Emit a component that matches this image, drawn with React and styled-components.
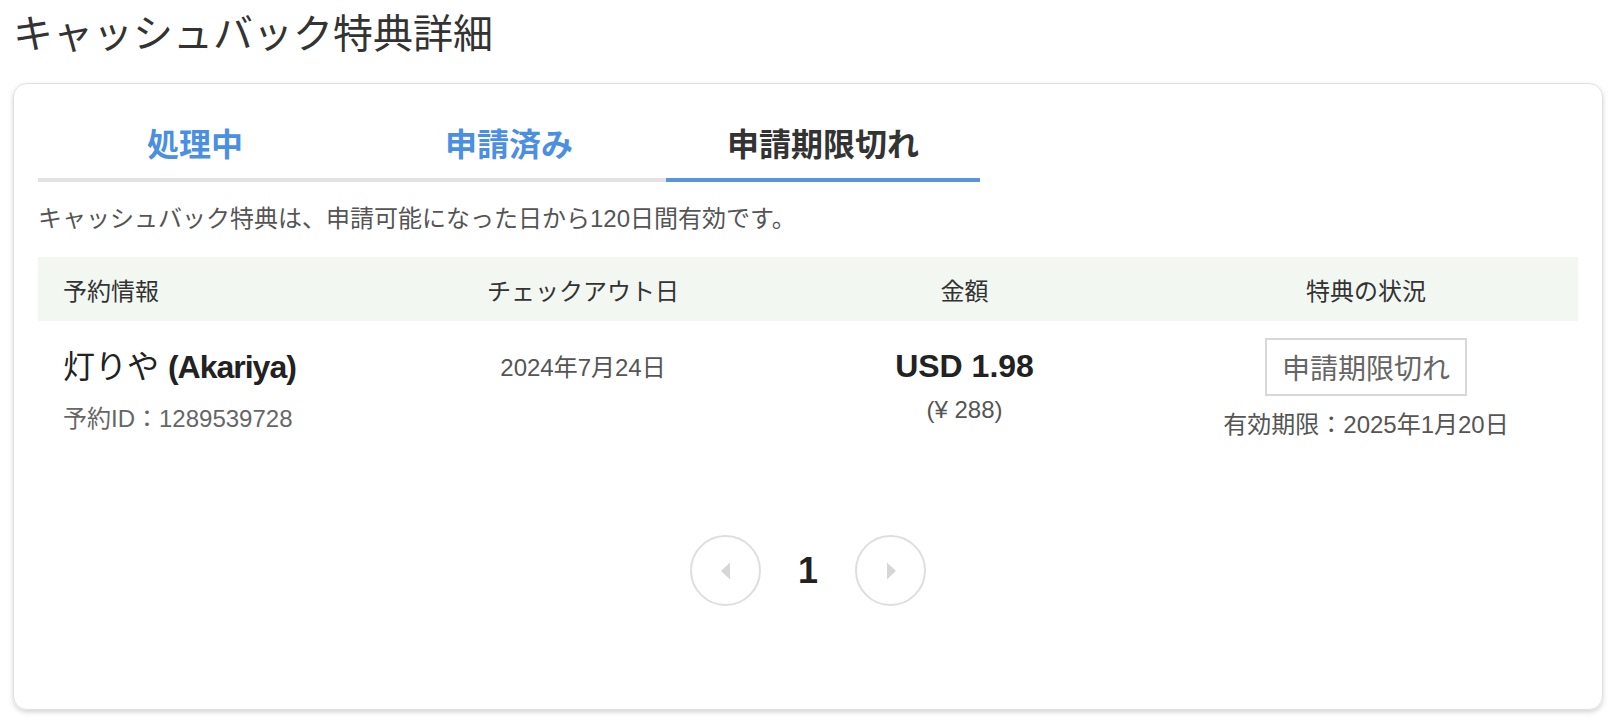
import React from 'react';
import styled, { createGlobalStyle } from 'styled-components';

const GlobalStyle = createGlobalStyle`
  body {
    margin: 0;
    background: #fff;
    font-family: "Liberation Sans", "Noto Sans CJK JP", sans-serif;
    color: #333;
  }
`;

const Page = styled.div`
  padding: 10px 11px 16px 13px;
`;

const Title = styled.h1`
  margin: 0 0 25px;
  font-size: 40px;
  font-weight: 400;
  line-height: 48px;
  color: #333;
`;

const Card = styled.section`
  border: 1px solid #e0e0e0;
  border-radius: 14px;
  box-shadow: 0 2px 5px rgba(0, 0, 0, 0.18);
  padding: 22px 24px 0;
  height: 627px;
  box-sizing: border-box;
`;

const TabBar = styled.div`
  display: flex;
`;

const Tab = styled.div`
  width: 314px;
  height: 72px;
  display: flex;
  align-items: center;
  justify-content: center;
  font-size: 32px;
  font-weight: 700;
  color: ${({ $active }) => ($active ? '#333' : '#4a8fe2')};
  border-bottom: 4px solid ${({ $active }) => ($active ? '#5b92dc' : '#e2e2e2')};
`;

const Notice = styled.p`
  margin: 21px 0 22px;
  font-size: 24px;
  line-height: 32px;
  color: #555;
`;

const Row = styled.div`
  display: grid;
  grid-template-columns: 353px 384px 379px 1fr;
  align-items: ${({ $head }) => ($head ? 'center' : 'start')};
  background: ${({ $head }) => ($head ? '#f2f7f2' : 'transparent')};
  height: ${({ $head }) => ($head ? '64px' : 'auto')};
`;

const HeadCell = styled.div`
  font-size: 24px;
  color: #333;
  text-align: ${({ $left }) => ($left ? 'left' : 'center')};
  padding-left: ${({ $left }) => ($left ? '25px' : '0')};
`;

const Cell = styled.div`
  display: flex;
  flex-direction: column;
  align-items: ${({ $left }) => ($left ? 'flex-start' : 'center')};
  padding-left: ${({ $left }) => ($left ? '25px' : '0')};
  padding-top: ${({ $top }) => $top || '0'};
`;

const Name = styled.div`
  font-size: 32px;
  line-height: 40px;
  color: #222;

  b {
    font-weight: 700;
    letter-spacing: -1px;
  }
`;

const SubText = styled.div`
  font-size: 24px;
  line-height: 32px;
  color: ${({ $dark }) => ($dark ? '#555' : '#666')};
  margin-top: ${({ $mt }) => $mt || '0'};
`;

const Amount = styled.div`
  font-size: 32px;
  font-weight: 700;
  line-height: 40px;
  color: #222;
`;

const StatusBox = styled.div`
  width: 202px;
  height: 58px;
  box-sizing: border-box;
  border: 2px solid #d8d8d8;
  display: flex;
  align-items: center;
  justify-content: center;
  font-size: 28px;
  color: #666;
`;

const Pager = styled.nav`
  display: flex;
  justify-content: center;
  align-items: center;
  margin-top: 94px;
`;

const PageBtn = styled.button`
  width: 71px;
  height: 71px;
  box-sizing: border-box;
  border-radius: 50%;
  border: 2px solid #dedede;
  background: #fff;
  display: flex;
  align-items: center;
  justify-content: center;
  padding: 0;
`;

const PageNum = styled.span`
  width: 94px;
  text-align: center;
  font-size: 36px;
  font-weight: 700;
  color: #222;
`;

const Arrow = ({ dir }) => (
  <svg width="12" height="18" viewBox="0 0 12 18">
    {dir === 'left' ? (
      <polygon points="10,0.5 1,9 10,17.5" fill="#d5d6d9" />
    ) : (
      <polygon points="2,0.5 11,9 2,17.5" fill="#d5d6d9" />
    )}
  </svg>
);

export default function App() {
  return (
    <>
      <GlobalStyle />
      <Page>
        <Title>キャッシュバック特典詳細</Title>
        <Card>
          <TabBar>
            <Tab>処理中</Tab>
            <Tab>申請済み</Tab>
            <Tab $active>申請期限切れ</Tab>
          </TabBar>
          <Notice>キャッシュバック特典は、申請可能になった日から120日間有効です。</Notice>
          <Row $head>
            <HeadCell $left>予約情報</HeadCell>
            <HeadCell>チェックアウト日</HeadCell>
            <HeadCell>金額</HeadCell>
            <HeadCell>特典の状況</HeadCell>
          </Row>
          <Row>
            <Cell $left $top="26px">
              <Name>
                灯りや <b>(Akariya)</b>
              </Name>
              <SubText $mt="16px">予約ID：1289539728</SubText>
            </Cell>
            <Cell $top="31px">
              <SubText $dark>2024年7月24日</SubText>
            </Cell>
            <Cell $top="25px">
              <Amount>USD 1.98</Amount>
              <SubText $dark $mt="8px">(¥ 288)</SubText>
            </Cell>
            <Cell $top="17px">
              <StatusBox>申請期限切れ</StatusBox>
              <SubText $dark $mt="13px">有効期限：2025年1月20日</SubText>
            </Cell>
          </Row>
          <Pager>
            <PageBtn aria-label="前へ">
              <Arrow dir="left" />
            </PageBtn>
            <PageNum>1</PageNum>
            <PageBtn aria-label="次へ">
              <Arrow dir="right" />
            </PageBtn>
          </Pager>
        </Card>
      </Page>
    </>
  );
}
